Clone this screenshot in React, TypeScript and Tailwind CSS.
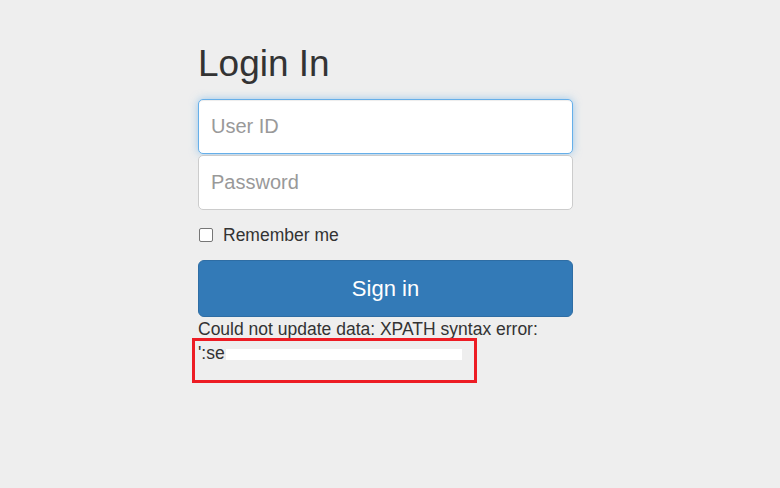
export default function App() {
  return (
    <div className="min-h-[488px] w-[780px] bg-[#eeeeee] font-['Liberation_Sans',Arial,sans-serif] text-[#333333]">
      <div className="ml-[198px] w-[375px] pt-[44px]">
        <h2 className="text-[37px] leading-[1.1] mb-[14px] font-normal">Login In</h2>
        <div className="flex flex-col">
          <input
            className="h-[55px] w-full rounded-[5px] border border-[#66afe9] bg-white px-[12px] text-[20px] placeholder:text-[#999] outline-none shadow-[inset_0_1px_1px_rgba(0,0,0,0.075),0_0_8px_rgba(102,175,233,0.6)]"
            placeholder="User ID"
          />
          <input
            className="mt-[1px] h-[55px] w-full rounded-[5px] border border-[#cccccc] bg-white px-[12px] text-[20px] placeholder:text-[#999] outline-none"
            placeholder="Password"
          />
        </div>
        <label className="mt-[12px] flex items-center gap-[10px] text-[17.5px]">
          <span className="ml-[1px] h-[14px] w-[14px] rounded-[2px] border border-[#767676] bg-white" />
          Remember me
        </label>
        <button className="mt-[12px] h-[57px] w-full rounded-[6px] border border-[#2e6da4] bg-[#337ab7] text-[22px] text-white">
          Sign in
        </button>
        <div className="relative text-[17.5px] leading-[24px]">
          <p>Could not update data: XPATH syntax error:</p>
          <p className="relative">
            ':se
            <span className="absolute left-[28px] top-[8px] h-[11px] w-[236px] bg-white" />
          </p>
          <div className="absolute left-[-6px] top-[21px] h-[45px] w-[285px] border-[3px] border-[#ed1c24]" />
        </div>
      </div>
    </div>
  );
}
